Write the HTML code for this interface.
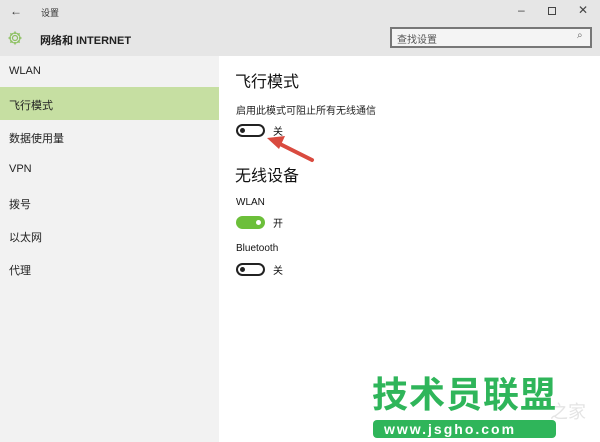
<!DOCTYPE html>
<html><head><meta charset="utf-8"><style>
*{margin:0;padding:0;box-sizing:border-box}
body{width:600px;height:442px;overflow:hidden;background:#fff;font-family:"Liberation Sans","Noto Sans CJK SC",sans-serif;position:relative;color:#111}
.top{position:absolute;left:0;top:0;width:600px;height:56px;background:#e6e6e6}
.nav{position:absolute;left:0;top:56px;width:219px;height:386px;background:#f2f2f2}
.item{position:absolute;left:9px;font-size:11px;color:#222}
.sel{position:absolute;left:0;top:87px;width:219px;height:33px;background:#c6dfa2}
.t{position:absolute;white-space:nowrap}
.sw{position:absolute;width:29px;height:13px;border:2px solid #222;border-radius:7px}
.sw::after{content:"";position:absolute;left:2px;top:2px;width:5px;height:5px;border-radius:50%;background:#222}
.on{background:#6cbf3a;border-color:#6cbf3a}
.on::after{left:auto;right:2px;background:#fff}
</style></head><body>
<div class="top"></div>
<div class="t" style="left:10px;top:4px;font-size:12px;color:#333">←</div>
<div class="t" style="left:41px;top:6px;font-size:9px;color:#333">设置</div>
<div class="t" style="left:518px;top:3px;font-size:12px;color:#444">–</div>
<div style="position:absolute;left:548px;top:7px;width:8px;height:8px;border:1px solid #444"></div>
<div class="t" style="left:578px;top:3px;font-size:12px;color:#444">✕</div>
<svg style="position:absolute;left:7px;top:30px" width="16" height="16" viewBox="0 0 16 16"><circle cx="8" cy="8" r="2.5" fill="none" stroke="#8cc060" stroke-width="1.2"/><path d="M8 1.5v2.5M8 12v2.5M1.5 8h2.5M12 8h2.5M3.4 3.4l1.8 1.8M10.8 10.8l1.8 1.8M3.4 12.6l1.8-1.8M10.8 5.2l1.8-1.8" stroke="#8cc060" stroke-width="1.5"/><circle cx="8" cy="8" r="5" fill="none" stroke="#8cc060" stroke-width="1.1"/></svg>
<div class="t" style="left:40px;top:32px;font-size:11px;font-weight:bold;color:#222">网络和 INTERNET</div>
<div style="position:absolute;left:390px;top:27px;width:202px;height:21px;border:2px solid #777;background:#f4f4f4"></div>
<div class="t" style="left:397px;top:31px;font-size:10px;color:#555">查找设置</div>
<div class="t" style="left:577px;top:30px;font-size:10px;color:#666">⌕</div>
<div class="nav"></div>
<div class="sel"></div>
<div class="item" style="top:65px">WLAN</div>
<div class="item" style="top:97px">飞行模式</div>
<div class="item" style="top:130px">数据使用量</div>
<div class="item" style="top:163px">VPN</div>
<div class="item" style="top:196px">拨号</div>
<div class="item" style="top:229px">以太网</div>
<div class="item" style="top:262px">代理</div>
<div class="t" style="left:235px;top:68px;font-size:16px;color:#111">飞行模式</div>
<div class="t" style="left:236px;top:102px;font-size:10px;color:#222">启用此模式可阻止所有无线通信</div>
<div class="sw" style="left:236px;top:124px"></div>
<div class="t" style="left:273px;top:123px;font-size:10px">关</div>
<div class="t" style="left:235px;top:162px;font-size:16px">无线设备</div>
<div class="t" style="left:236px;top:197px;font-size:10px">WLAN</div>
<div class="sw on" style="left:236px;top:216px"></div>
<div class="t" style="left:273px;top:215px;font-size:10px">开</div>
<div class="t" style="left:236px;top:243px;font-size:10px">Bluetooth</div>
<div class="sw" style="left:236px;top:263px"></div>
<div class="t" style="left:273px;top:262px;font-size:10px">关</div>
<svg style="position:absolute;left:0;top:0" width="600" height="442"><path d="M312 160 L278 143" stroke="#d94a3f" stroke-width="4" stroke-linecap="round"/><path d="M267 138 L285 136 L279 149 Z" fill="#d94a3f"/></svg>
<div class="t" style="left:550px;top:398px;font-size:18px;color:#e4e4e4">之家</div>
<div class="t" style="left:372px;top:372px;font-size:36px;line-height:46px;font-weight:bold;color:#2fb55a;letter-spacing:1px">技术员联盟</div>
<div style="position:absolute;left:373px;top:420px;width:183px;height:18px;background:#2fb55a;border-radius:4px"></div>
<div class="t" style="left:384px;top:420px;font-size:14px;line-height:18px;font-weight:bold;color:#fff;letter-spacing:2px">www.jsgho.com</div>
</body></html>
